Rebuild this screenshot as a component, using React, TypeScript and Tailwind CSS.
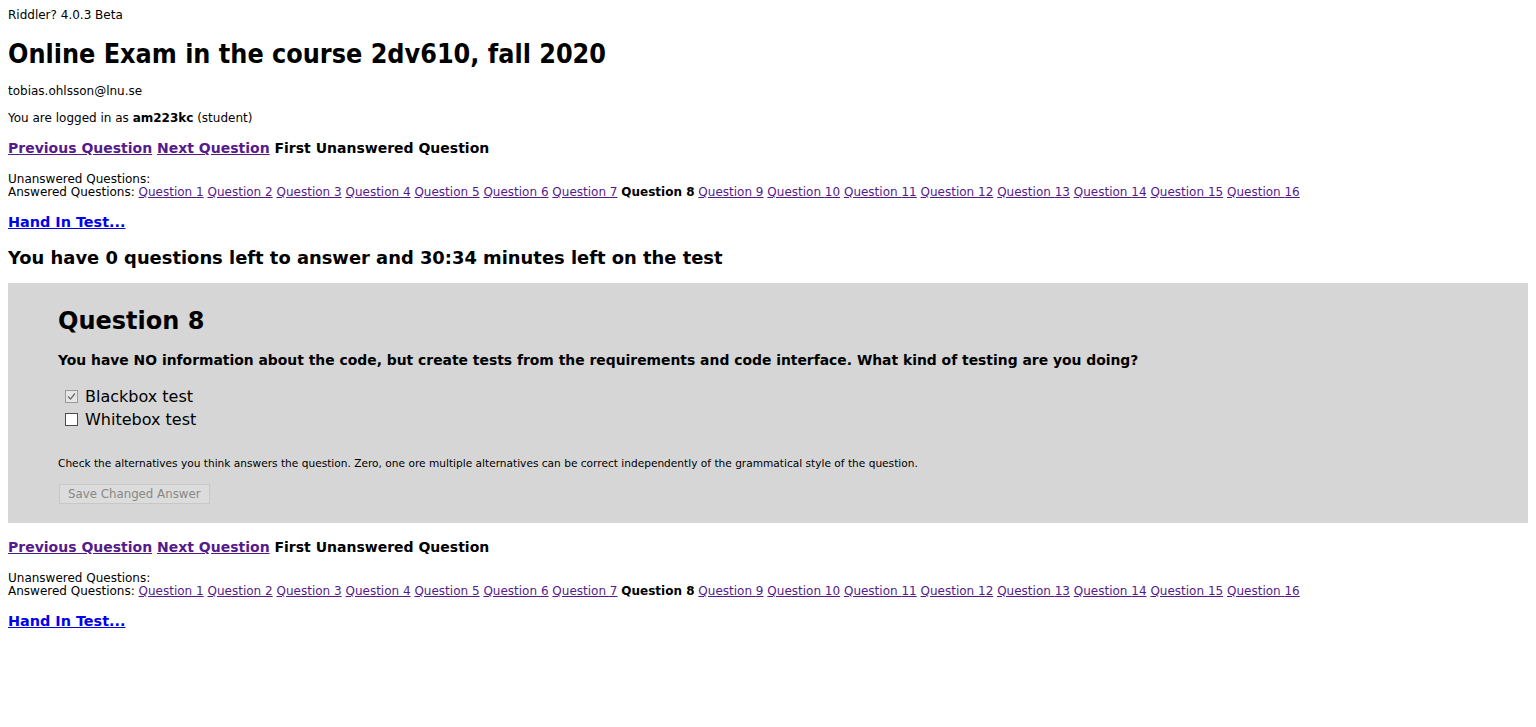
import React from 'react';

const tahoma = "font-['DejaVu_Sans',Verdana,sans-serif]";
const tahomaBold = "font-['DejaVu_Sans_Condensed','DejaVu_Sans',sans-serif]";
const verdana = "font-['DejaVu_Sans',Verdana,sans-serif]";

const questions = Array.from({ length: 16 }, (_, i) => i + 1);

function Box({ checked }: { checked?: boolean }) {
  return checked ? (
    <span className="w-[13px] h-[13px] border border-[#9a9a9a] bg-[#e6e6e6] flex items-center justify-center">
      <svg width="9" height="9" viewBox="0 0 9 9">
        <path d="M1 4.5 L3.5 7 L8 1.5" fill="none" stroke="#6b6b6b" strokeWidth="1.2" />
      </svg>
    </span>
  ) : (
    <span className="w-[13px] h-[13px] border border-[#4d4d4d] bg-white" />
  );
}

function NavBlock() {
  return (
    <div>
      <div className={`${verdana} text-[14px] font-bold leading-[18px] h-[18px]`}>
        <a href="#" className="text-[#551a8b] underline">Previous Question</a>{' '}
        <a href="#" className="text-[#551a8b] underline">Next Question</a>{' '}
        <span>First Unanswered Question</span>
      </div>
      <div className={`${tahoma} text-[12px] leading-[13px] mt-[16px]`}>
        <div>Unanswered Questions:</div>
        <div>
          Answered Questions:{' '}
          {questions.map((q) =>
            q === 8 ? (
              <React.Fragment key={q}>
                <b>Question 8</b>{' '}
              </React.Fragment>
            ) : (
              <React.Fragment key={q}>
                <a href="#" className="text-[#551a8b] underline">Question {q}</a>{' '}
              </React.Fragment>
            )
          )}
        </div>
      </div>
      <div className={`${verdana} text-[14.4px] font-bold leading-[18px] mt-[14px]`}>
        <a href="#" className="text-[#0000ee] underline">Hand In Test...</a>
      </div>
    </div>
  );
}

export default function App() {
  return (
    <div className="bg-white text-black min-h-[727px] px-2 pt-[8px]">
      <div className={`${tahoma} text-[12px] leading-[14px]`}>Riddler? 4.0.3 Beta</div>
      <h1 className={`${tahomaBold} text-[26.7px] font-bold leading-[30px] mt-[17px]`}>
        Online Exam in the course 2dv610, fall 2020
      </h1>
      <div className={`${tahoma} text-[12px] leading-[14px] mt-[15px]`}>tobias.ohlsson@lnu.se</div>
      <div className={`${tahoma} text-[12px] leading-[14px] mt-[13px]`}>
        You are logged in as <b>am223kc</b> (student)
      </div>
      <div className="mt-[14px]">
        <NavBlock />
      </div>
      <h2 className={`${verdana} text-[17.9px] font-bold leading-[22px] mt-[16px]`}>
        You have 0 questions left to answer and 30:34 minutes left on the test
      </h2>
      <div className="bg-[#d6d6d6] mt-[14px] pl-[50px] pr-4 pt-[23px] pb-[19px]">
        <h3 className={`${verdana} text-[24px] font-bold leading-[30px]`}>Question 8</h3>
        <p className={`${verdana} text-[13.9px] font-bold leading-[18px] mt-[15px]`}>
          You have NO information about the code, but create tests from the requirements and code interface. What kind of testing are you doing?
        </p>
        <div className={`${verdana} text-[16px] leading-[23px] mt-[16px]`}>
          <label className="flex items-center gap-[7px] pl-[7px]">
            <Box checked />
            <span>Blackbox test</span>
          </label>
          <label className="flex items-center gap-[7px] pl-[7px]">
            <Box />
            <span>Whitebox test</span>
          </label>
        </div>
        <p className={`${verdana} text-[10.6px] leading-[12px] mt-[26px]`}>
          Check the alternatives you think answers the question. Zero, one ore multiple alternatives can be correct independently of the grammatical style of the question.
        </p>
        <button
          disabled
          className={`${verdana} text-[11.8px] leading-[16px] mt-[15px] ml-[1px] px-[8px] py-[1px] bg-[#dcdcdc] border border-[#c8c8c8] text-[#888]`}
        >
          Save Changed Answer
        </button>
      </div>
      <div className="mt-[15px]">
        <NavBlock />
      </div>
    </div>
  );
}
